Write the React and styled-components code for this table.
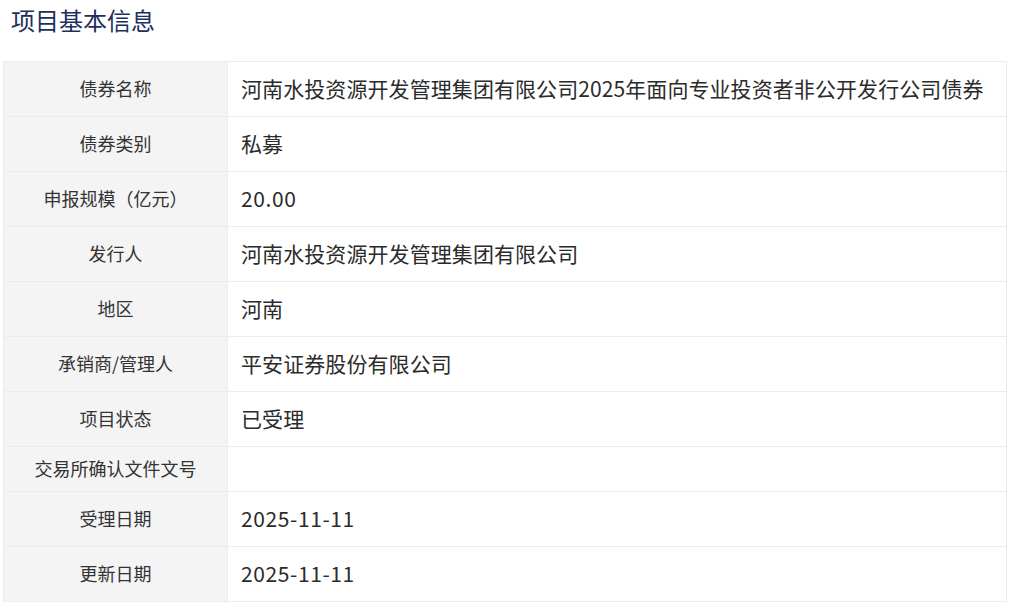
import styled, { createGlobalStyle } from 'styled-components';

const GlobalStyle = createGlobalStyle`
  body {
    margin: 0;
    background: #fff;
    font-family: "Noto Sans CJK SC", "Noto Sans", sans-serif;
  }
`;

const Page = styled.section`
  padding: 0 9px 0 3px;
`;

const Title = styled.h2`
  margin: 0;
  padding: 8px 0 0 8px;
  height: 53px;
  font-size: 24px;
  line-height: 24px;
  font-weight: 400;
  color: #1d2f5c;
`;

const Table = styled.table`
  width: 1004px;
  border-collapse: collapse;
  border: 1px solid #ececec;
`;

const Row = styled.tr`
  border-bottom: 1px solid #ececec;
`;

const Label = styled.th`
  width: 223px;
  padding: 9px 0 11px;
  background: #f4f4f4;
  border-right: 1px solid #ececec;
  font-size: 18px;
  line-height: 24px;
  font-weight: 400;
  color: #333;
  text-align: center;
  vertical-align: middle;
`;

const Value = styled.td`
  padding: 9px 12px 11px 13px;
  font-size: 21px;
  line-height: ${({ empty }) => (empty ? '24px' : '34px')};
  color: #2b2b2b;
  vertical-align: middle;
  white-space: nowrap;
  letter-spacing: ${({ numeric }) => (numeric ? '0.6px' : '0.08px')};
`;

const rows = [
  ['债券名称', '河南水投资源开发管理集团有限公司2025年面向专业投资者非公开发行公司债券'],
  ['债券类别', '私募'],
  ['申报规模（亿元）', '20.00'],
  ['发行人', '河南水投资源开发管理集团有限公司'],
  ['地区', '河南'],
  ['承销商/管理人', '平安证券股份有限公司'],
  ['项目状态', '已受理'],
  ['交易所确认文件文号', ''],
  ['受理日期', '2025-11-11'],
  ['更新日期', '2025-11-11'],
];

const App = () => {
  return (
    <Page>
      <GlobalStyle />
      <Title>项目基本信息</Title>
      <Table>
        <tbody>
          {rows.map(([label, value]) => (
            <Row key={label}>
              <Label>{label}</Label>
              <Value empty={!value} numeric={/^[\d.-]+$/.test(value)}>
                {value}
              </Value>
            </Row>
          ))}
        </tbody>
      </Table>
    </Page>
  );
};

export default App;
